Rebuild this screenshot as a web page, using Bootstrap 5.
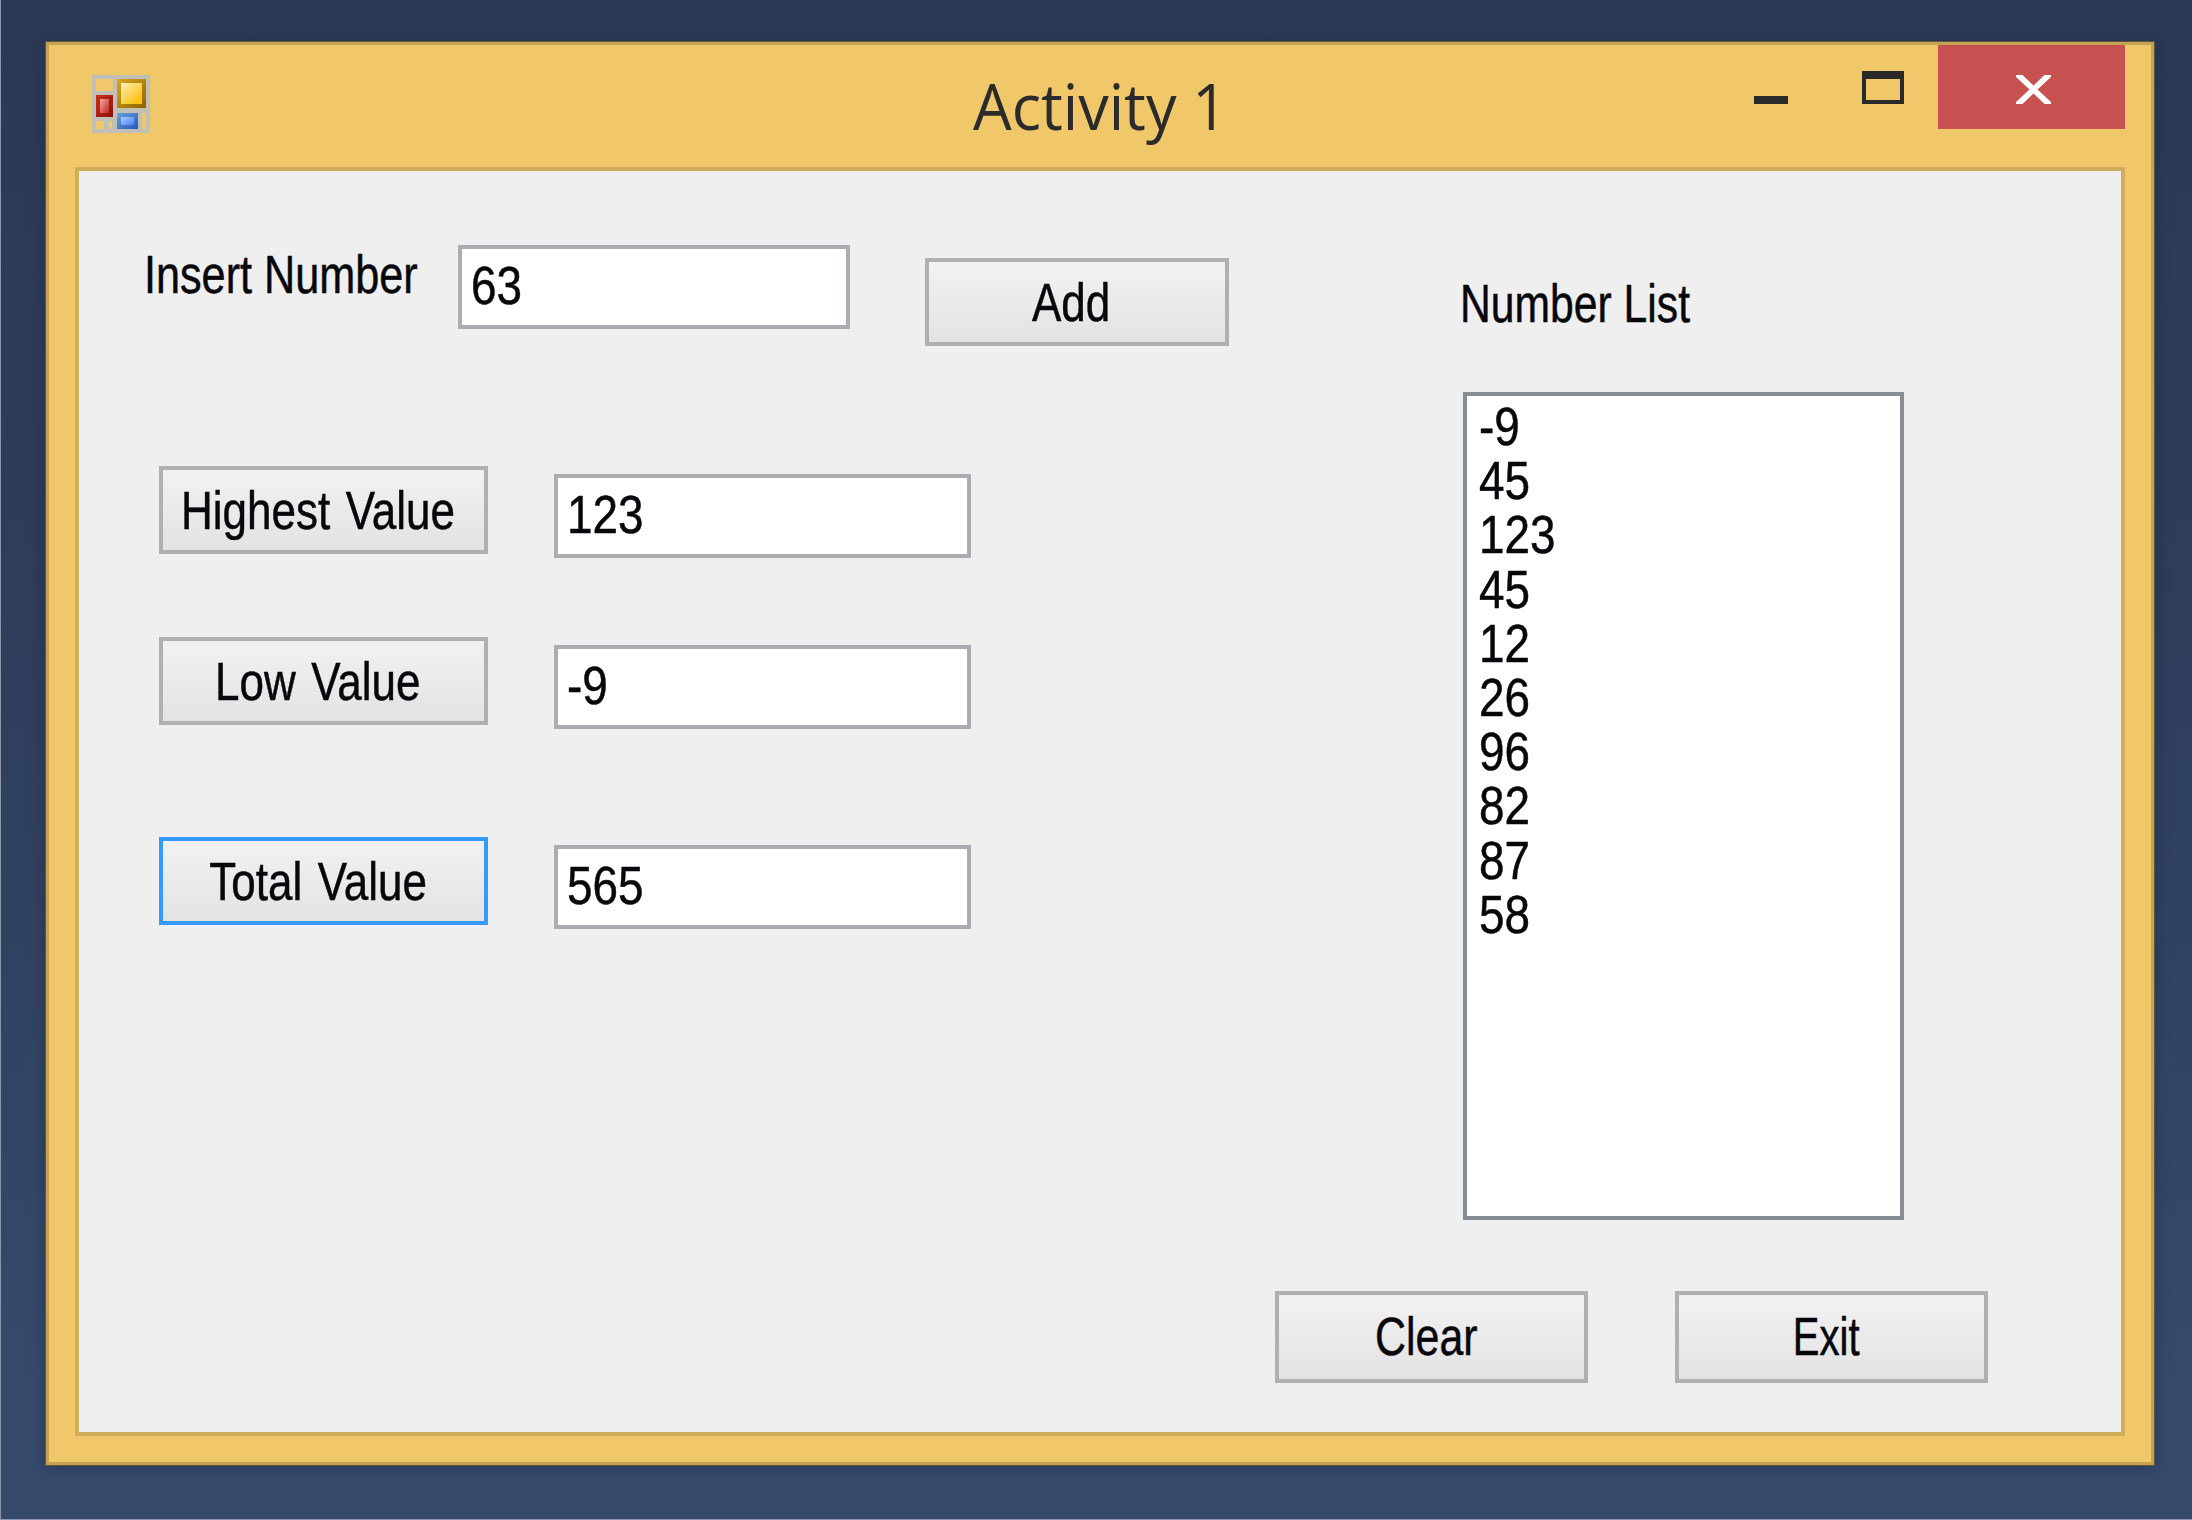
<!DOCTYPE html>
<html lang="en">
<head>
<meta charset="utf-8">
<title>Activity 1</title>
<link href="https://cdn.jsdelivr.net/npm/bootstrap@5.3.0/dist/css/bootstrap.min.css" rel="stylesheet">
<style>
html,body{height:100%}
body{margin:0;overflow:hidden;font-family:"Liberation Sans",Arial,sans-serif;font-size:53px;line-height:60px;color:#08080c}
.desktop{width:2192px;height:1520px;padding:41px 37px 54px 44px;background:linear-gradient(#2b3955,#2d3d5a 40%,#364a6b 95%);border-left:1px solid #8d96a6;border-bottom:1px solid #8d9ab0}
.win{height:1425px;width:2110px;background:#f0c869;border:4px solid #c6a353;outline:1px solid #5f583f;outline-offset:-1px;box-shadow:0 2px 12px rgba(20,30,50,.35)}
.titlebar{height:122px}
.app-icon{margin:30px 0 0 43px;width:58px;height:58px}
.caption{font-family:"Open Sans","Noto Sans",sans-serif;font-size:64px;line-height:80px;color:#2b2b2b;margin-top:21px}
.caption span,.tx{display:inline-block;white-space:nowrap;transform:scaleX(.83)}
.caption span{transform:scaleX(.955)}
.tx{transform-origin:0 50%;-webkit-text-stroke:.5px #08080c}
.btn .tx{transform-origin:50% 50%;margin-left:-11px}
.controls{height:84px;margin-right:26px}
.ctl{height:84px;padding:0;border:0;border-radius:0;display:block}
.ctl-min{width:92px}.ctl-max{width:117px}
.ctl-close{width:187px;background:#c75050}
.ctl svg{display:block}
.client{margin:0 26px 0 26px;width:2050px;height:1269px;border:4px solid #d0ad5a;background:#efefef}
.upper{height:1119px}
.left-pane{width:1384px;padding:74px 0 0 80px}
.wbtn{height:88px;padding:2px 0 0;border:4px solid #b0b0b0;border-radius:0;background:linear-gradient(#f0f0f0 10%,#e3e3e3);font-size:53px;line-height:60px;color:#08080c}
.wbtn.focused{border-color:#3699ff}
.wide{width:329px}
.wide .tx{word-spacing:4px}
.wtext{height:84px;border:4px solid #abadb3;background:#fff;line-height:74px;padding-left:9px;flex:none}
.wtext .tx,.listbox .tx{transform:scaleX(.865)}
.lbl-insert{width:318px;padding-left:4px;margin-left:-19px;margin-top:0}
.lbl-insert .tx{transform:scaleX(.815)}
.in-num{width:392px}.in-val{width:417px;margin-top:8px}
.btn-add{width:304px;margin:13px 0 0 75px}
.row-in{height:221px}.row-hi{height:171px}.row-lo{height:200px}
.gap-val{gap:66px}
.lbl-list{margin-top:103px;height:118px;margin-left:-3px}
.lbl-list .tx{transform:scaleX(.805)}
.listbox{width:441px;height:828px;border:4px solid #868d97;background:#fff;padding:4px 0 0 12px}
.listbox li{height:54.2px;line-height:54px}
.foot{padding-left:1196px;padding-top:1px;gap:87px}
.foot .wbtn{width:313px;height:92px;padding-top:0}
.foot .tx{transform:scaleX(.81)}
.foot .tx.narrow{transform:scaleX(.755)}
</style>
<script src="https://cdn.jsdelivr.net/npm/bootstrap@5.3.0/dist/js/bootstrap.bundle.min.js"></script>
</head>
<body>
<div class="desktop">
 <main class="win">
  <header class="titlebar d-flex align-items-start justify-content-between position-relative">
   <svg class="app-icon" viewBox="0 0 58 58">
    <defs>
     <linearGradient id="gy" x1="0" y1="0" x2="1" y2="1"><stop offset="0" stop-color="#ffeeb8"/><stop offset=".8" stop-color="#fcc316"/></linearGradient>
     <linearGradient id="gyb" x1="0" y1="0" x2="1" y2="1"><stop offset="0" stop-color="#d9a520"/><stop offset="1" stop-color="#8b6500"/></linearGradient>
     <linearGradient id="gr" x1="0" y1="0" x2="1" y2="1"><stop offset="0" stop-color="#f4a9a2"/><stop offset="1" stop-color="#c4261e"/></linearGradient>
     <linearGradient id="grb" x1="0" y1="0" x2="1" y2="1"><stop offset="0" stop-color="#cf2f1b"/><stop offset="1" stop-color="#861010"/></linearGradient>
     <linearGradient id="gb" x1="0" y1="0" x2="1" y2="1"><stop offset="0" stop-color="#a9cbff"/><stop offset="1" stop-color="#4a7ff0"/></linearGradient>
     <linearGradient id="gbb" x1="0" y1="0" x2="1" y2="1"><stop offset="0" stop-color="#66a3dc"/><stop offset="1" stop-color="#2a55b5"/></linearGradient>
    </defs>
    <path fill="#c2bfb6" fill-rule="evenodd" d="M0 0H58V58H0ZM4 4V16H21V4ZM4 46V54H12V46ZM17 46V54H20V46ZM50 38V54H54V38Z"/>
    <rect x="4" y="20" width="17" height="22" fill="url(#grb)"/><rect x="8" y="24" width="9" height="14" fill="url(#gr)"/>
    <rect x="25" y="4" width="29" height="29" fill="url(#gyb)"/><rect x="29" y="8" width="21" height="21" fill="url(#gy)"/>
    <rect x="25" y="38" width="21" height="16" fill="url(#gbb)"/><rect x="29" y="42" width="13" height="8" fill="url(#gb)"/>
   </svg>
   <div class="caption position-absolute start-0 end-0 top-0 text-center"><span>Activity 1</span></div>
   <div class="controls d-flex position-relative">
    <button class="btn ctl ctl-min" aria-label="Minimize"><svg width="92" height="84"><rect x="25" y="51" width="34" height="8" fill="#2a2a2a"/></svg></button>
    <button class="btn ctl ctl-max" aria-label="Maximize"><svg width="117" height="84"><path fill="#2a2a2a" fill-rule="evenodd" d="M41 26H83V59H41ZM45 34V55H79V34Z"/></svg></button>
    <button class="btn ctl ctl-close" aria-label="Close"><svg width="187" height="84"><path fill="#fff" d="M78 30H84.500L95.500 40.500L106.500 30H113V32L99.500 44.500L113 57V59H106.500L95.500 48.500L84.500 59H78V57L91.500 44.500L78 32Z"/></svg></button>
   </div>
  </header>
  <section class="client">
   <div class="upper d-flex">
    <div class="left-pane flex-shrink-0">
     <div class="row-in d-flex align-items-start">
      <div class="lbl-insert flex-shrink-0"><span class="tx">Insert Number</span></div>
      <div class="wtext in-num"><span class="tx">63</span></div>
      <button class="btn wbtn btn-add"><span class="tx">Add</span></button>
     </div>
     <div class="row-hi d-flex align-items-start gap-val">
      <button class="btn wbtn wide"><span class="tx">Highest Value</span></button>
      <div class="wtext in-val"><span class="tx">123</span></div>
     </div>
     <div class="row-lo d-flex align-items-start gap-val">
      <button class="btn wbtn wide"><span class="tx">Low Value</span></button>
      <div class="wtext in-val"><span class="tx">-9</span></div>
     </div>
     <div class="d-flex align-items-start gap-val">
      <button class="btn wbtn wide focused"><span class="tx">Total Value</span></button>
      <div class="wtext in-val"><span class="tx">565</span></div>
     </div>
    </div>
    <div class="right-pane">
     <div class="lbl-list"><span class="tx">Number List</span></div>
     <ul class="listbox list-unstyled mb-0">
      <li><span class="tx">-9</span></li><li><span class="tx">45</span></li><li><span class="tx">123</span></li><li><span class="tx">45</span></li><li><span class="tx">12</span></li><li><span class="tx">26</span></li><li><span class="tx">96</span></li><li><span class="tx">82</span></li><li><span class="tx">87</span></li><li><span class="tx">58</span></li>
     </ul>
    </div>
   </div>
   <div class="foot d-flex">
    <button class="btn wbtn"><span class="tx">Clear</span></button>
    <button class="btn wbtn"><span class="tx narrow">Exit</span></button>
   </div>
  </section>
 </main>
</div>
</body>
</html>
